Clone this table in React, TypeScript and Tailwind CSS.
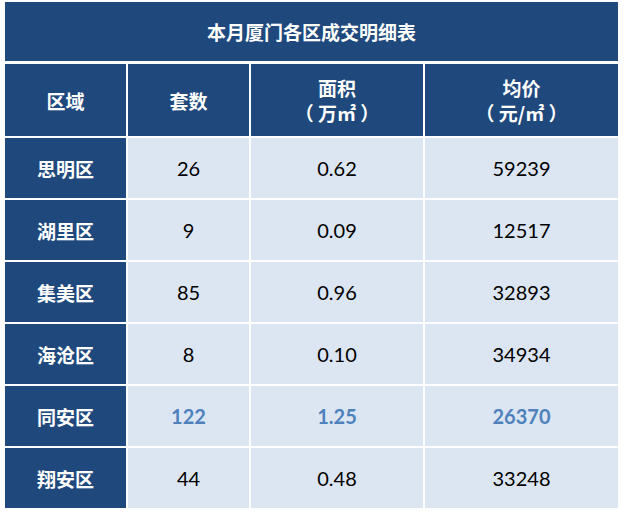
const rows = [
  { area: '思明区', count: '26', size: '0.62', price: '59239' },
  { area: '湖里区', count: '9', size: '0.09', price: '12517' },
  { area: '集美区', count: '85', size: '0.96', price: '32893' },
  { area: '海沧区', count: '8', size: '0.10', price: '34934' },
  { area: '同安区', count: '122', size: '1.25', price: '26370', hot: true },
  { area: '翔安区', count: '44', size: '0.48', price: '33248' },
]

const head =
  "bg-[#1f497d] flex flex-col items-center justify-center text-white text-[19px] font-bold leading-[25px] font-['Noto_Sans_CJK_SC','Noto_Sans',sans-serif]"

export default function App() {
  return (
    <div className="w-[625px] h-[513px] bg-white pt-[2px] pl-[5px]">
      <div className="w-[613px]">
        {/* Title bar */}
        <div className={`h-[59px] mb-[3px] ${head}`}>本月厦门各区成交明细表</div>

        <div className="grid grid-cols-[121px_121px_172px_193px] gap-[2px] bg-white">
          <div className={`h-[72px] ${head}`}>区域</div>
          <div className={`h-[72px] ${head}`}>套数</div>
          <div className={`h-[72px] ${head}`}>
            <span>面积</span>
            <span>（ 万㎡ ）</span>
          </div>
          <div className={`h-[72px] ${head}`}>
            <span>均价</span>
            <span>（ 元/㎡ ）</span>
          </div>

          {rows.map((r) => {
            const cell = `h-[60px] bg-[#dce6f2] flex items-center justify-center text-[20px] font-['Lato','Noto_Sans',sans-serif] ${
              r.hot ? 'text-[#4f81bd] font-bold' : 'text-black'
            }`
            return (
              <div key={r.area} className="contents">
                <div className={`h-[60px] ${head}`}>{r.area}</div>
                <div className={cell}>{r.count}</div>
                <div className={cell}>{r.size}</div>
                <div className={cell}>{r.price}</div>
              </div>
            )
          })}
        </div>
      </div>
    </div>
  )
}
